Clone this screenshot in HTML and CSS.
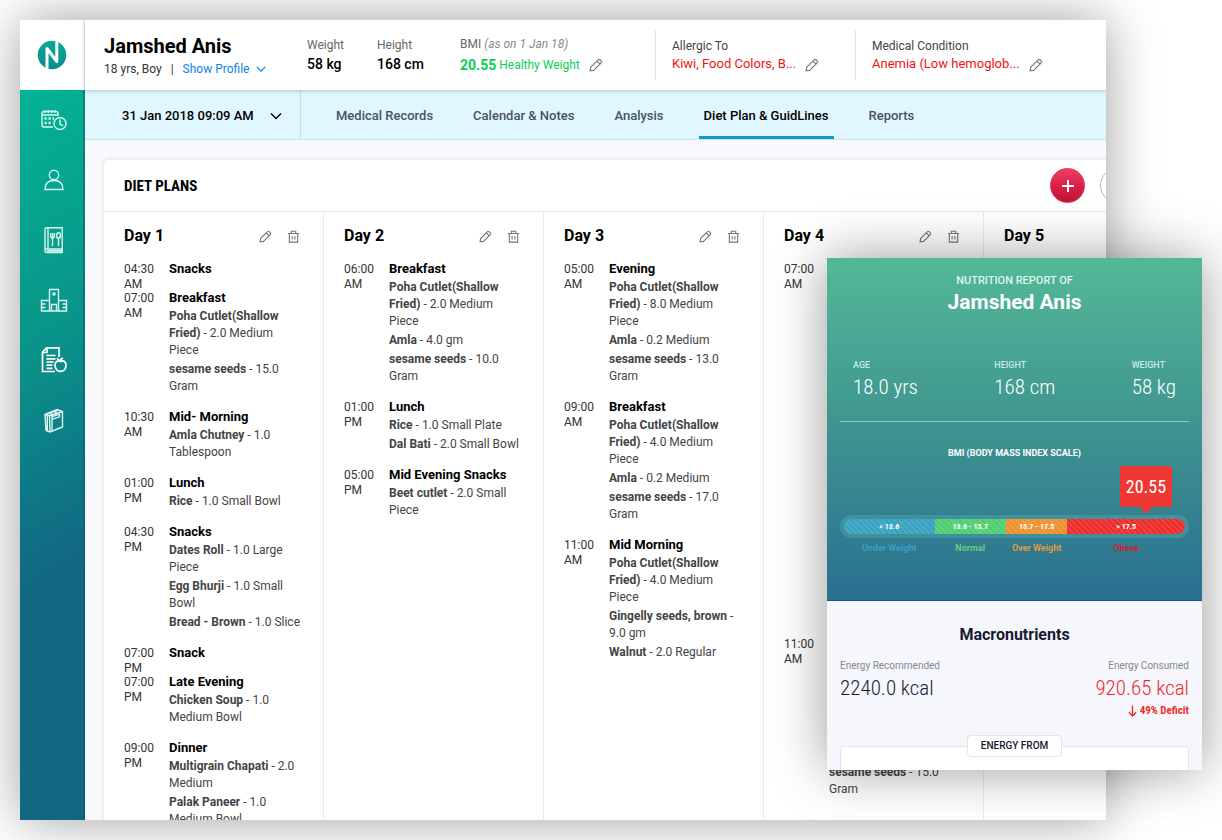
FILE: index.html
```html
<!DOCTYPE html>
<html lang="en">
<head>
<meta charset="utf-8">
<meta name="viewport" content="width=device-width, initial-scale=1">
<title>Diet Plan - Jamshed Anis</title>
<link rel="stylesheet" href="styles.css">
</head>
<body>
<svg class="defs" aria-hidden="true">
  <symbol id="pencil" viewBox="0 0 14 14"><path d="M1.2 12.8l.5-3.6 7.4-7.4a1.3 1.3 0 0 1 1.8 0l1.3 1.3a1.3 1.3 0 0 1 0 1.8l-7.4 7.4zM7.8 3.1l3.1 3.1"/></symbol>
  <symbol id="trash" viewBox="0 0 14 14"><path d="M1 3.700h12M2.500 3.700v9.300h9V3.700M4.600 3.500V1.300h4.800v2.200M5.500 6.500v3.800M8.500 6.500v3.800"/></symbol>
  <symbol id="chevron" viewBox="0 0 12 8"><path d="M1 1.5l5 5 5-5"/></symbol>
</svg>

<div class="app">
  <aside class="sidebar">
    <a class="logo" href="#" aria-label="Home">
      <svg viewBox="0 0 30 30" width="30" height="30">
        <defs><linearGradient id="lg" x1="0" y1="0" x2="0" y2="1"><stop offset="0" stop-color="#08ab94"/><stop offset="1" stop-color="#0b8b8c"/></linearGradient></defs>
        <circle cx="15" cy="15" r="14.300" fill="url(#lg)"/>
        <path d="M10 30V8.500l9.800 13V0" fill="none" stroke="#fff" stroke-width="3" stroke-linejoin="round"/>
      </svg>
    </a>
    <nav class="side-nav" aria-label="Main">
      <a href="#" aria-label="Appointments"><svg viewBox="0 0 28 28"><path d="M13 21H4a2 2 0 0 1-2-2V7.500a2 2 0 0 1 2-2h12a2 2 0 0 1 2 2V10M2 9h16M5 4v3M8.300 4v3M11.600 4v3M15 4v3"/><circle cx="20" cy="17.500" r="6"/><path d="M20 13.500v4.500l3 1.800"/><path class="dots" d="M4.500 12.500h2.200M8.500 12.500h2.200M12.500 12.500h1.500M4.500 17h2.200M8.500 17h2.200"/></svg></a>
      <a href="#" aria-label="Patients"><svg viewBox="0 0 28 28"><circle cx="14" cy="9" r="4.700"/><path d="M5 23.500c0-6 3.500-9 9-9s9 3 9 9z"/></svg></a>
      <a href="#" aria-label="Recipes"><svg viewBox="0 0 28 28"><path d="M6.500 1.800H22.200V26.500H6.500a1.500 1.500 0 0 1-1.500-1.500V3.300a1.500 1.500 0 0 1 1.500-1.500zM8 1.800V23M22 23H7a2 2 0 0 0-2 1.600M7 24.800h15"/><path d="M10.600 7v3a1.900 1.900 0 0 0 3.800 0V7M12.500 7v13M18.500 12v8"/><ellipse cx="18.500" cy="9.500" rx="1.900" ry="2.800"/></svg></a>
      <a href="#" aria-label="Hospital"><svg viewBox="0 0 28 28"><path d="M9.500 25V3.500h9V25M9.500 14.500h-8V25h25V14.500h-8M11.500 25v-6.500h5V25M14 6v4M12 8h4M1.500 18h4M1.500 21.500h4M26.500 18h-4M26.500 21.500h-4"/></svg></a>
      <a href="#" aria-label="Diet plans"><svg class="bold" viewBox="0 0 28 28"><path d="M15 25.500H2.500V6l4-4.200H19V11M2.500 6.500h4.500V2M6.500 9.500h9M6.500 12.800h9M6.500 16h7M6.500 19.200h6M6.500 22.300h6"/><path d="M20.500 15.500c-3-1.500-5.500.3-5.500 3.800 0 3.400 2.300 6.500 5.500 5.900 3.200.6 5.500-2.500 5.500-5.900 0-3.500-2.500-5.300-5.500-3.800zM20.500 15.500c0-2 .8-3 2.500-3.300M20.400 14.500c-1.800 0-2.800-.8-3-2.300"/></svg></a>
      <a href="#" aria-label="Library"><svg viewBox="0 0 28 28"><path d="M5 8.500l12-5 5.500 2v15.500L10 26l-4-1.500L5 8.500zM5 8.500l4.500 1.200L22.500 5.500M9.500 9.700L10 26M12 9v16.200M7 7.800l12-4M12.500 10.500l7-2.300v2.600l-7 2.400M9 7l4 1.300M13 5.300l4 1.300M7.300 10v14"/></svg></a>
    </nav>
  </aside>

  <div class="main">
    <header class="patient">
      <div class="identity">
        <h1>Jamshed Anis</h1>
        <div class="identity-sub"><span>18 yrs, Boy</span><span class="bar">|</span><button class="link" type="button">Show Profile <svg class="chev"><use href="#chevron"/></svg></button></div>
      </div>
      <dl class="fact weight"><dt>Weight</dt><dd>58 kg</dd></dl>
      <dl class="fact height"><dt>Height</dt><dd>168 cm</dd></dl>
      <dl class="fact bmi"><dt>BMI <em>(as on 1 Jan 18)</em></dt><dd><b>20.55</b> Healthy Weight<button class="icon" type="button" aria-label="Edit BMI"><svg><use href="#pencil"/></svg></button></dd></dl>
      <dl class="fact alert"><dt>Allergic To</dt><dd>Kiwi, Food Colors, B...<button class="icon" type="button" aria-label="Edit allergies"><svg><use href="#pencil"/></svg></button></dd></dl>
      <dl class="fact alert"><dt>Medical Condition</dt><dd>Anemia (Low hemoglob...<button class="icon" type="button" aria-label="Edit condition"><svg><use href="#pencil"/></svg></button></dd></dl>
    </header>

    <div class="subbar">
      <button class="visit" type="button">31 Jan 2018 09:09 AM <svg class="chev"><use href="#chevron"/></svg></button>
      <nav class="tabs" aria-label="Patient">
        <a href="#">Medical Records</a>
        <a href="#">Calendar &amp; Notes</a>
        <a href="#">Analysis</a>
        <a href="#" class="active" aria-current="page">Diet Plan &amp; GuidLines</a>
        <a href="#">Reports</a>
      </nav>
    </div>

    <main class="content">
      <section class="panel">
        <div class="panel-head">
          <h2>DIET PLANS</h2>
          <div class="panel-actions">
            <button class="round add" type="button" aria-label="Add plan"><svg viewBox="0 0 14 14"><path d="M7 1v12M1 7h12"/></svg></button>
            <button class="round more" type="button" aria-label="More"></button>
          </div>
        </div>
        <div class="days">
          <article class="day">
            <div class="day-head"><h3>Day 1</h3><button class="icon" type="button" aria-label="Edit day 1"><svg><use href="#pencil"/></svg></button><button class="icon" type="button" aria-label="Delete day 1"><svg><use href="#trash"/></svg></button></div>
            <div class="meal"><time>04:30 AM</time><div><h4>Snacks</h4></div></div>
            <div class="meal"><time>07:00 AM</time><div><h4>Breakfast</h4><ul><li><b>Poha Cutlet(Shallow Fried)</b> - 2.0 Medium Piece</li><li><b>sesame seeds</b> - 15.0 Gram</li></ul></div></div>
            <div class="meal"><time>10:30 AM</time><div><h4>Mid- Morning</h4><ul><li><b>Amla Chutney</b> - 1.0 Tablespoon</li></ul></div></div>
            <div class="meal"><time>01:00 PM</time><div><h4>Lunch</h4><ul><li><b>Rice</b> - 1.0 Small Bowl</li></ul></div></div>
            <div class="meal"><time>04:30 PM</time><div><h4>Snacks</h4><ul><li><b>Dates Roll</b> - 1.0 Large Piece</li><li><b>Egg Bhurji</b> - 1.0 Small Bowl</li><li><b>Bread - Brown</b> - 1.0 Slice</li></ul></div></div>
            <div class="meal"><time>07:00 PM</time><div><h4>Snack</h4></div></div>
            <div class="meal"><time>07:00 PM</time><div><h4>Late Evening</h4><ul><li><b>Chicken Soup</b> - 1.0 Medium Bowl</li></ul></div></div>
            <div class="meal"><time>09:00 PM</time><div><h4>Dinner</h4><ul><li><b>Multigrain Chapati</b> - 2.0 Medium</li><li><b>Palak Paneer</b> - 1.0 Medium Bowl</li></ul></div></div>
          </article>
          <article class="day">
            <div class="day-head"><h3>Day 2</h3><button class="icon" type="button" aria-label="Edit day 2"><svg><use href="#pencil"/></svg></button><button class="icon" type="button" aria-label="Delete day 2"><svg><use href="#trash"/></svg></button></div>
            <div class="meal"><time>06:00 AM</time><div><h4>Breakfast</h4><ul><li><b>Poha Cutlet(Shallow Fried)</b> - 2.0 Medium Piece</li><li><b>Amla</b> - 4.0 gm</li><li><b>sesame seeds</b> - 10.0 Gram</li></ul></div></div>
            <div class="meal"><time>01:00 PM</time><div><h4>Lunch</h4><ul><li><b>Rice</b> - 1.0 Small Plate</li><li><b>Dal Bati</b> - 2.0 Small Bowl</li></ul></div></div>
            <div class="meal"><time>05:00 PM</time><div><h4>Mid Evening Snacks</h4><ul><li><b>Beet cutlet</b> - 2.0 Small Piece</li></ul></div></div>
          </article>
          <article class="day">
            <div class="day-head"><h3>Day 3</h3><button class="icon" type="button" aria-label="Edit day 3"><svg><use href="#pencil"/></svg></button><button class="icon" type="button" aria-label="Delete day 3"><svg><use href="#trash"/></svg></button></div>
            <div class="meal"><time>05:00 AM</time><div><h4>Evening</h4><ul><li><b>Poha Cutlet(Shallow Fried)</b> - 8.0 Medium Piece</li><li><b>Amla</b> - 0.2 Medium</li><li><b>sesame seeds</b> - 13.0 Gram</li></ul></div></div>
            <div class="meal"><time>09:00 AM</time><div><h4>Breakfast</h4><ul><li><b>Poha Cutlet(Shallow Fried)</b> - 4.0 Medium Piece</li><li><b>Amla</b> - 0.2 Medium</li><li><b>sesame seeds</b> - 17.0 Gram</li></ul></div></div>
            <div class="meal"><time>11:00 AM</time><div><h4>Mid Morning</h4><ul><li><b>Poha Cutlet(Shallow Fried)</b> - 4.0 Medium Piece</li><li><b>Gingelly seeds, brown</b> - 9.0 gm</li><li><b>Walnut</b> - 2.0 Regular</li></ul></div></div>
          </article>
          <article class="day">
            <div class="day-head"><h3>Day 4</h3><button class="icon" type="button" aria-label="Edit day 4"><svg><use href="#pencil"/></svg></button><button class="icon" type="button" aria-label="Delete day 4"><svg><use href="#trash"/></svg></button></div>
            <div class="meal long"><time>07:00 AM</time></div>
            <div class="meal late"><time>11:00 AM</time><ul><li><b>sesame seeds</b> - 15.0 Gram</li></ul></div>
          </article>
          <article class="day">
            <div class="day-head"><h3>Day 5</h3></div>
          </article>
        </div>
      </section>
    </main>
  </div>
</div>

<section class="report" aria-label="Nutrition report">
  <div class="report-top">
    <p class="report-kicker">NUTRITION REPORT OF</p>
    <h2>Jamshed Anis</h2>
    <dl class="stats">
      <div><dt>AGE</dt><dd>18.0 yrs</dd></div>
      <div><dt>HEIGHT</dt><dd>168 cm</dd></div>
      <div><dt>WEIGHT</dt><dd>58 kg</dd></div>
    </dl>
    <h3>BMI (BODY MASS INDEX SCALE)</h3>
    <div class="scale-wrap">
      <div class="scale">
        <span class="under">&lt; 13.6</span><span class="normal">13.6 - 15.7</span><span class="over">15.7 - 17.5</span><span class="obese">&gt; 17.5</span>
      </div>
      <div class="scale-labels">
        <span class="under">Under Weight</span><span class="normal">Normal</span><span class="over">Over Weight</span><span class="obese">Obese</span>
      </div>
      <div class="marker">20.55</div>
    </div>
  </div>
  <div class="report-body">
    <h3>Macronutrients</h3>
    <div class="energy">
      <dl><dt>Energy Recommended</dt><dd>2240.0 kcal</dd></dl>
      <dl class="consumed"><dt>Energy Consumed</dt><dd>920.65 kcal</dd><dd class="deficit"><svg viewBox="0 0 10 14"><path d="M5 1v11.500M1 8.500l4 4 4-4"/></svg>49% Deficit</dd></dl>
    </div>
    <div class="source"><h4>ENERGY FROM</h4></div>
  </div>
</section>
</body>
</html>
```
FILE: styles.css
```css
* { box-sizing: border-box; }
body { margin: 0; padding: 20px 116px 20px 20px; height: 100vh; overflow: hidden; background: #fff; color: #000; font: 14px/18px Roboto, sans-serif; position: relative; }
h1, h2, h3, h4, p, dl, dd, ul { margin: 0; padding: 0; }
ul { list-style: none; }
a { color: inherit; text-decoration: none; }
button { margin: 0; padding: 0; border: 0; background: none; font: inherit; color: inherit; cursor: pointer; }
svg { fill: none; stroke: currentColor; }
.defs { position: absolute; width: 0; height: 0; }

.app { display: flex; height: 100%; overflow: hidden; background: #f8f9fc; box-shadow: 0 0 50px rgba(0, 0, 0, .38); }

/* Sidebar */
.sidebar { flex: 0 0 65px; display: flex; flex-direction: column; }
.logo { height: 70px; display: flex; align-items: center; justify-content: center; background: #fff; border-right: 1px solid #e3e5e8; }
.logo svg { stroke: none; }
.side-nav { flex: 1; display: flex; flex-direction: column; align-items: center; gap: 32px; padding: 16px 0 0 5px; color: #d9f6f1; background: linear-gradient(150deg, #03b394, #099489 34%, #0d7a87 52%, #126782 66%); border-right: 2px solid rgba(9, 82, 120, .5); }
.side-nav a, .side-nav svg { display: block; width: 28px; height: 28px; }
.side-nav svg { stroke-width: 1.4; }
.side-nav .bold { stroke-width: 1.7; color: #fff; }
.side-nav .dots { stroke-width: 2.6; }

.main { flex: 1; min-width: 0; display: flex; flex-direction: column; }

/* Patient header */
.patient { flex: 0 0 70px; display: flex; align-items: flex-start; padding: 10px 0 10px 19px; background: #fff; box-shadow: 0 1px 4px rgba(0, 50, 70, .25); position: relative; z-index: 1; }
.identity { flex: 0 0 203px; padding-top: 4px; }
.identity h1 { font-size: 20px; line-height: 24px; font-weight: 700; }
.identity-sub { display: flex; gap: 9px; margin-top: 2px; font-size: 12px; color: #333; }
.link { display: flex; align-items: center; gap: 7px; color: #0a84e8; }
.chev { width: 10px; height: 8px; stroke-width: 1.5; }
.fact { padding-top: 6px; font-size: 12px; }
.fact dt { color: #666; }
.fact dd { display: flex; align-items: center; font-size: 14px; line-height: 20px; font-weight: 500; }
.weight { flex: 0 0 70px; }
.height { flex: 0 0 83px; }
.bmi { flex: 0 0 195px; padding-top: 5px; }
.bmi em { color: #8a8a8a; }
.bmi dd { gap: 3px; margin-top: 2px; font-size: 12px; font-weight: 400; color: #08cf55; }
.bmi dd b { font-size: 14px; font-weight: 700; }
.alert { flex: 0 0 200px; height: 50px; padding: 7px 0 0 16px; border-left: 1px solid #e2e3e5; }
.alert dt { color: #444; }
.alert dd { font-size: 13px; line-height: 18px; font-weight: 400; color: #f31212; white-space: nowrap; }
.icon { color: #777; }
.icon svg { display: block; width: 14px; height: 14px; stroke-width: 1.2; }
.fact .icon { margin-left: 9px; padding-top: 2px; }
.bmi .icon { margin-left: 6px; padding-top: 0; }

/* Date and tabs */
.subbar { flex: 0 0 50px; display: flex; background: #e1f7ff; border-bottom: 1px solid #cfe2ea; }
.visit { flex: 0 0 216px; display: flex; align-items: center; gap: 16px; padding: 2px 0 0 37px; font-size: 13px; font-weight: 500; border-right: 1px solid #c9dfe8; }
.visit .chev { width: 12px; }
.tabs { display: flex; gap: 30px; padding-left: 30px; font-size: 13px; font-weight: 500; color: #46545c; white-space: nowrap; }
.tabs a { display: flex; align-items: center; padding: 5px 5px 0; border-bottom: 3px solid transparent; }
.tabs .active { color: #000; border-color: #0c9bcb; }

/* Diet plans */
.content { flex: 1; min-height: 0; overflow: hidden; padding: 20px 0 0 19px; }
.panel { width: max-content; min-height: 100%; background: #fff; border-radius: 5px 0 0 0; box-shadow: 0 0 5px rgba(60, 70, 90, .15); }
.panel-head { display: flex; justify-content: space-between; align-items: center; height: 52px; padding: 0 69px 0 20px; border-bottom: 1px solid #e8e9eb; }
.panel-head h2 { font: 700 15px/20px "Roboto Condensed", "Liberation Sans Narrow", Roboto, sans-serif; }
.panel-actions { display: flex; gap: 15px; }
.round { width: 35px; height: 35px; border-radius: 50%; display: flex; align-items: center; justify-content: center; }
.add { color: #fff; background: linear-gradient(#ee3f66, #d91d48 55%, #b9172e); border: 1px solid #e5345b; }
.add svg { width: 14px; height: 14px; stroke-width: 2; }
.more { border: 1px solid #b4b6be; background: #fff; }
.days { display: grid; grid-template-columns: repeat(5, 220px); min-height: 700px; }
.day { padding: 12px 23px 0 20px; border-right: 1px solid #e8e9eb; }
.day-head { display: flex; align-items: center; gap: 15px; height: 24px; margin-bottom: 12px; }
.day-head h3 { margin-right: auto; font-size: 16px; line-height: 24px; font-weight: 700; }
.day-head svg { width: 13px; height: 13px; }
.meal { display: grid; grid-template-columns: 45px 1fr; align-items: start; min-height: 29px; }
.meal time { width: 35px; padding-top: 2px; margin-bottom: -3px; font-size: 12px; line-height: 15px; color: #333; }
.meal h4 { font-size: 13px; line-height: 18px; font-weight: 700; white-space: nowrap; }
.meal ul { margin-right: -3px; padding-bottom: 12px; }
.meal li { padding: 1px 0; font-size: 12px; line-height: 17px; color: #444; }
.meal li b { font-weight: 700; }
.meal.long { min-height: 375px; }
.meal.late ul { padding-top: 128px; }

/* Nutrition report */
.report { position: absolute; right: 20px; bottom: 70px; z-index: 2; width: 375px; height: 512px; overflow: hidden; background: #f6f7fc; box-shadow: 0 0 50px rgba(0, 0, 0, .4); }
.report { display: flex; flex-direction: column; }
.report-top { padding: 14px 13px 42px; color: #fff; text-align: center; background: linear-gradient(#53b897, #3e948f 50%, #296f91); border-bottom: 1px solid #0e5785; }
.report-kicker { font-size: 11px; line-height: 18px; font-weight: 500; color: #dcf7ee; }
.report-top h2 { font-size: 21px; line-height: 24px; font-weight: 700; }
.stats { display: flex; justify-content: space-between; margin-top: 43px; padding: 0 13px 20px; text-align: left; border-bottom: 1px solid rgba(200, 240, 235, .55); }
.stats dt { font-size: 9px; line-height: 16px; font-weight: 500; color: #c5ebe2; }
.stats dd, .energy dd { font: 300 21px/28px "DIN Condensed", "Roboto Condensed", "Liberation Sans Narrow", Roboto, sans-serif; }
.report-top h3 { margin: 22px 0 53px; font-size: 9px; line-height: 18px; font-weight: 700; }
.scale-wrap { position: relative; }
.scale { display: grid; grid-template-columns: 90fr 71fr 61fr 117fr; padding: 4px; border-radius: 12px; background: rgba(100, 185, 190, .3); font: 700 8px/15px "Roboto Condensed", "Liberation Sans Narrow", Roboto, sans-serif; }
.scale span { background-image: repeating-linear-gradient(45deg, rgba(255, 255, 255, .1) 0 2px, transparent 2px 4px); }
.scale .under { background-color: #36a2c1; border-radius: 8px 0 0 8px; }
.scale .normal { background-color: #4fce70; }
.scale .over { background-color: #ee912c; }
.scale .obese { background-color: #ed2b2a; border-radius: 0 8px 8px 0; }
.scale-labels { display: grid; grid-template-columns: 90fr 71fr 61fr 117fr; padding: 0 4px; font-size: 9px; line-height: 20px; font-weight: 700; white-space: nowrap; }
.scale-labels .under { color: #3d9fc0; }
.scale-labels .normal { color: #5fd07d; }
.scale-labels .over { color: #e49a3c; }
.scale-labels .obese { color: #cf2030; }
.marker { position: absolute; right: 17px; bottom: 51px; width: 52px; height: 41px; border-radius: 3px; background: #ef3734; font: 400 18px/41px "DIN Condensed", "Roboto Condensed", "Liberation Sans Narrow", Roboto, sans-serif; }
.marker::after { content: ""; position: absolute; left: 20px; top: 100%; border: 6px solid transparent; border-top: 7px solid #ef3734; border-bottom: 0; }
.report-body { flex: 1; display: flex; flex-direction: column; padding: 22px 13px 0; color: #161b33; }
.report-body h3 { text-align: center; font-size: 16px; line-height: 24px; font-weight: 700; }
.energy { display: flex; justify-content: space-between; margin-top: 11px; }
.energy dt { font-size: 10px; line-height: 16px; color: #858893; }
.energy .consumed { text-align: right; }
.energy .consumed dd { color: #ee2a2a; }
.energy .deficit { display: flex; justify-content: flex-end; align-items: center; gap: 3px; font-size: 11px; font-weight: 700; line-height: 18px; }
.deficit svg { width: 9px; height: 14px; stroke-width: 1.5; }
.source { flex: 1; margin-top: 26px; background: #fff; border: 1px solid #e4e5ea; border-bottom: 0; border-radius: 4px 4px 0 0; text-align: center; }
.source h4 { width: max-content; margin: -12px auto 0; padding: 0 13px; font-size: 10px; line-height: 20px; font-weight: 500; background: #fff; border: 1px solid #e4e5ea; border-radius: 4px; }
```
